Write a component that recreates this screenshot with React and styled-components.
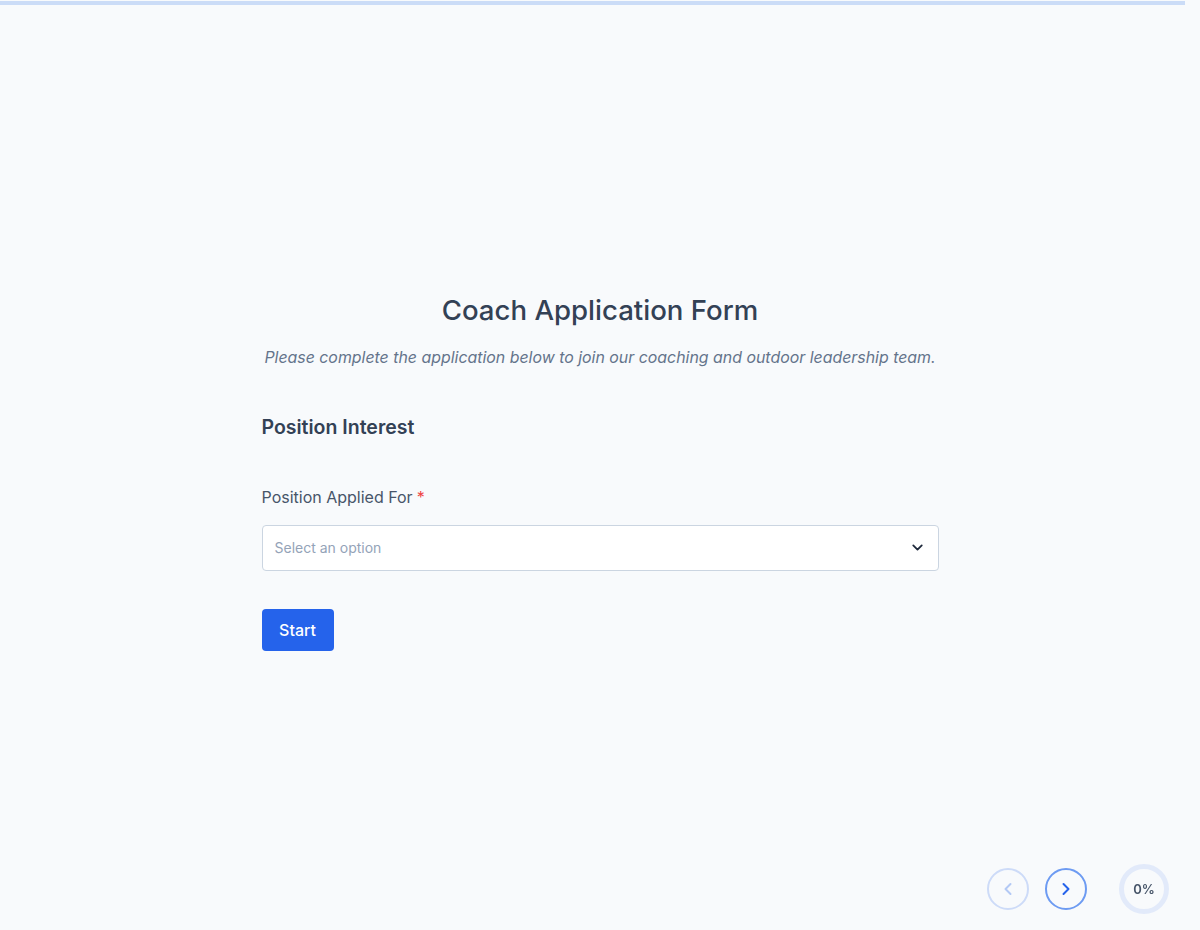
import React, { useState } from "react";
import styled, { createGlobalStyle } from "styled-components";

const GlobalStyle = createGlobalStyle`
    html, body {
        margin: 0;
        padding: 0;
        background: #f8fafc;
        font-family: Inter, "Noto Sans", "Liberation Sans", sans-serif;
        color: #334155;
    }
    * {
        box-sizing: border-box;
    }
`;

const TopTrack = styled.div`
    height: 5px;
    margin-right: 15px;
    padding-top: 1px;
`;

const TopFill = styled.div`
    height: 4px;
    background: #cbdcf7;
`;

const Page = styled.div`
    min-height: calc(100vh - 5px);
    display: flex;
    align-items: center;
    justify-content: center;
    padding-top: 8px;
`;

const Form = styled.form`
    width: 677px;
    display: flex;
    flex-direction: column;
`;

const Title = styled.h1`
    margin: 0;
    text-align: center;
    font-size: 27.6px;
    font-weight: 500;
    line-height: 34px;
    color: #334155;
`;

const Subtitle = styled.p`
    margin: 19px 0 0;
    text-align: center;
    font-size: 15.9px;
    font-style: italic;
    line-height: 24px;
    color: #64748b;
`;

const SectionTitle = styled.h2`
    margin: 43px 0 0;
    font-size: 19.5px;
    font-weight: 600;
    line-height: 28px;
    color: #334155;
`;

const Field = styled.div`
    margin-top: 45px;
    display: flex;
    flex-direction: column;
    gap: 17px;
`;

const Label = styled.label`
    font-size: 16px;
    line-height: 22px;
    color: #475569;
`;

const Required = styled.span`
    color: #ef4444;
    margin-left: 4px;
`;

const SelectBox = styled.button`
    height: 46px;
    width: 100%;
    display: flex;
    align-items: center;
    justify-content: space-between;
    padding: 0 12px;
    background: #ffffff;
    border: 1px solid #cbd5e1;
    border-radius: 4px;
    font-family: inherit;
    font-size: 14px;
    color: #94a3b8;
    cursor: pointer;
`;

const StartButton = styled.button`
    margin-top: 38px;
    align-self: flex-start;
    width: 72px;
    height: 42px;
    background: #2563eb;
    color: #ffffff;
    border: none;
    border-radius: 4px;
    font-family: inherit;
    font-size: 16px;
    font-weight: 500;
    cursor: pointer;
`;

const Footer = styled.div`
    position: fixed;
    right: 31px;
    bottom: 16px;
    display: flex;
    align-items: center;
    gap: 32px;
`;

const NavGroup = styled.div`
    display: flex;
    gap: 16px;
`;

const NavButton = styled.button`
    width: 42px;
    height: 42px;
    border-radius: 50%;
    background: transparent;
    border: 2px solid ${(p) => (p.$disabled ? "#cddbf8" : "#6d9bf2")};
    color: ${(p) => (p.$disabled ? "#b3c9f5" : "#2563eb")};
    display: flex;
    align-items: center;
    justify-content: center;
    padding: 0;
    cursor: ${(p) => (p.$disabled ? "default" : "pointer")};
`;

const Progress = styled.div`
    width: 50px;
    height: 50px;
    border-radius: 50%;
    border: 5px solid #e2eafa;
    display: flex;
    align-items: center;
    justify-content: center;
    font-size: 13px;
    font-weight: 600;
    color: #475569;
`;

function Chevron({ dir = "right" }) {
    const d = dir === "left" ? "M15 6l-6 6 6 6" : "M9 6l6 6-6 6";
    return (
        <svg width="20" height="20" viewBox="0 0 24 24" fill="none" stroke="currentColor" strokeWidth="2.4" strokeLinecap="round" strokeLinejoin="round">
            <path d={d} />
        </svg>
    );
}

function App() {
    const [position] = useState("");

    return (
        <>
            <GlobalStyle />
            <TopTrack>
                <TopFill />
            </TopTrack>
            <Page>
                <Form onSubmit={(e) => e.preventDefault()}>
                    <Title>Coach Application Form</Title>
                    <Subtitle>
                        Please complete the application below to join our coaching and outdoor leadership team.
                    </Subtitle>

                    <SectionTitle>Position Interest</SectionTitle>

                    <Field>
                        <Label>
                            Position Applied For<Required>*</Required>
                        </Label>
                        <SelectBox type="button">
                            <span>{position || "Select an option"}</span>
                            <svg width="17" height="17" viewBox="0 0 24 24" fill="none" stroke="#1e293b" strokeWidth="2.5" strokeLinecap="round" strokeLinejoin="round">
                                <path d="M6 9l6 6 6-6" />
                            </svg>
                        </SelectBox>
                    </Field>

                    <StartButton type="submit">Start</StartButton>
                </Form>
            </Page>

            <Footer>
                <NavGroup>
                    <NavButton $disabled type="button">
                        <Chevron dir="left" />
                    </NavButton>
                    <NavButton type="button">
                        <Chevron dir="right" />
                    </NavButton>
                </NavGroup>
                <Progress>0%</Progress>
            </Footer>
        </>
    );
}

export default App;
